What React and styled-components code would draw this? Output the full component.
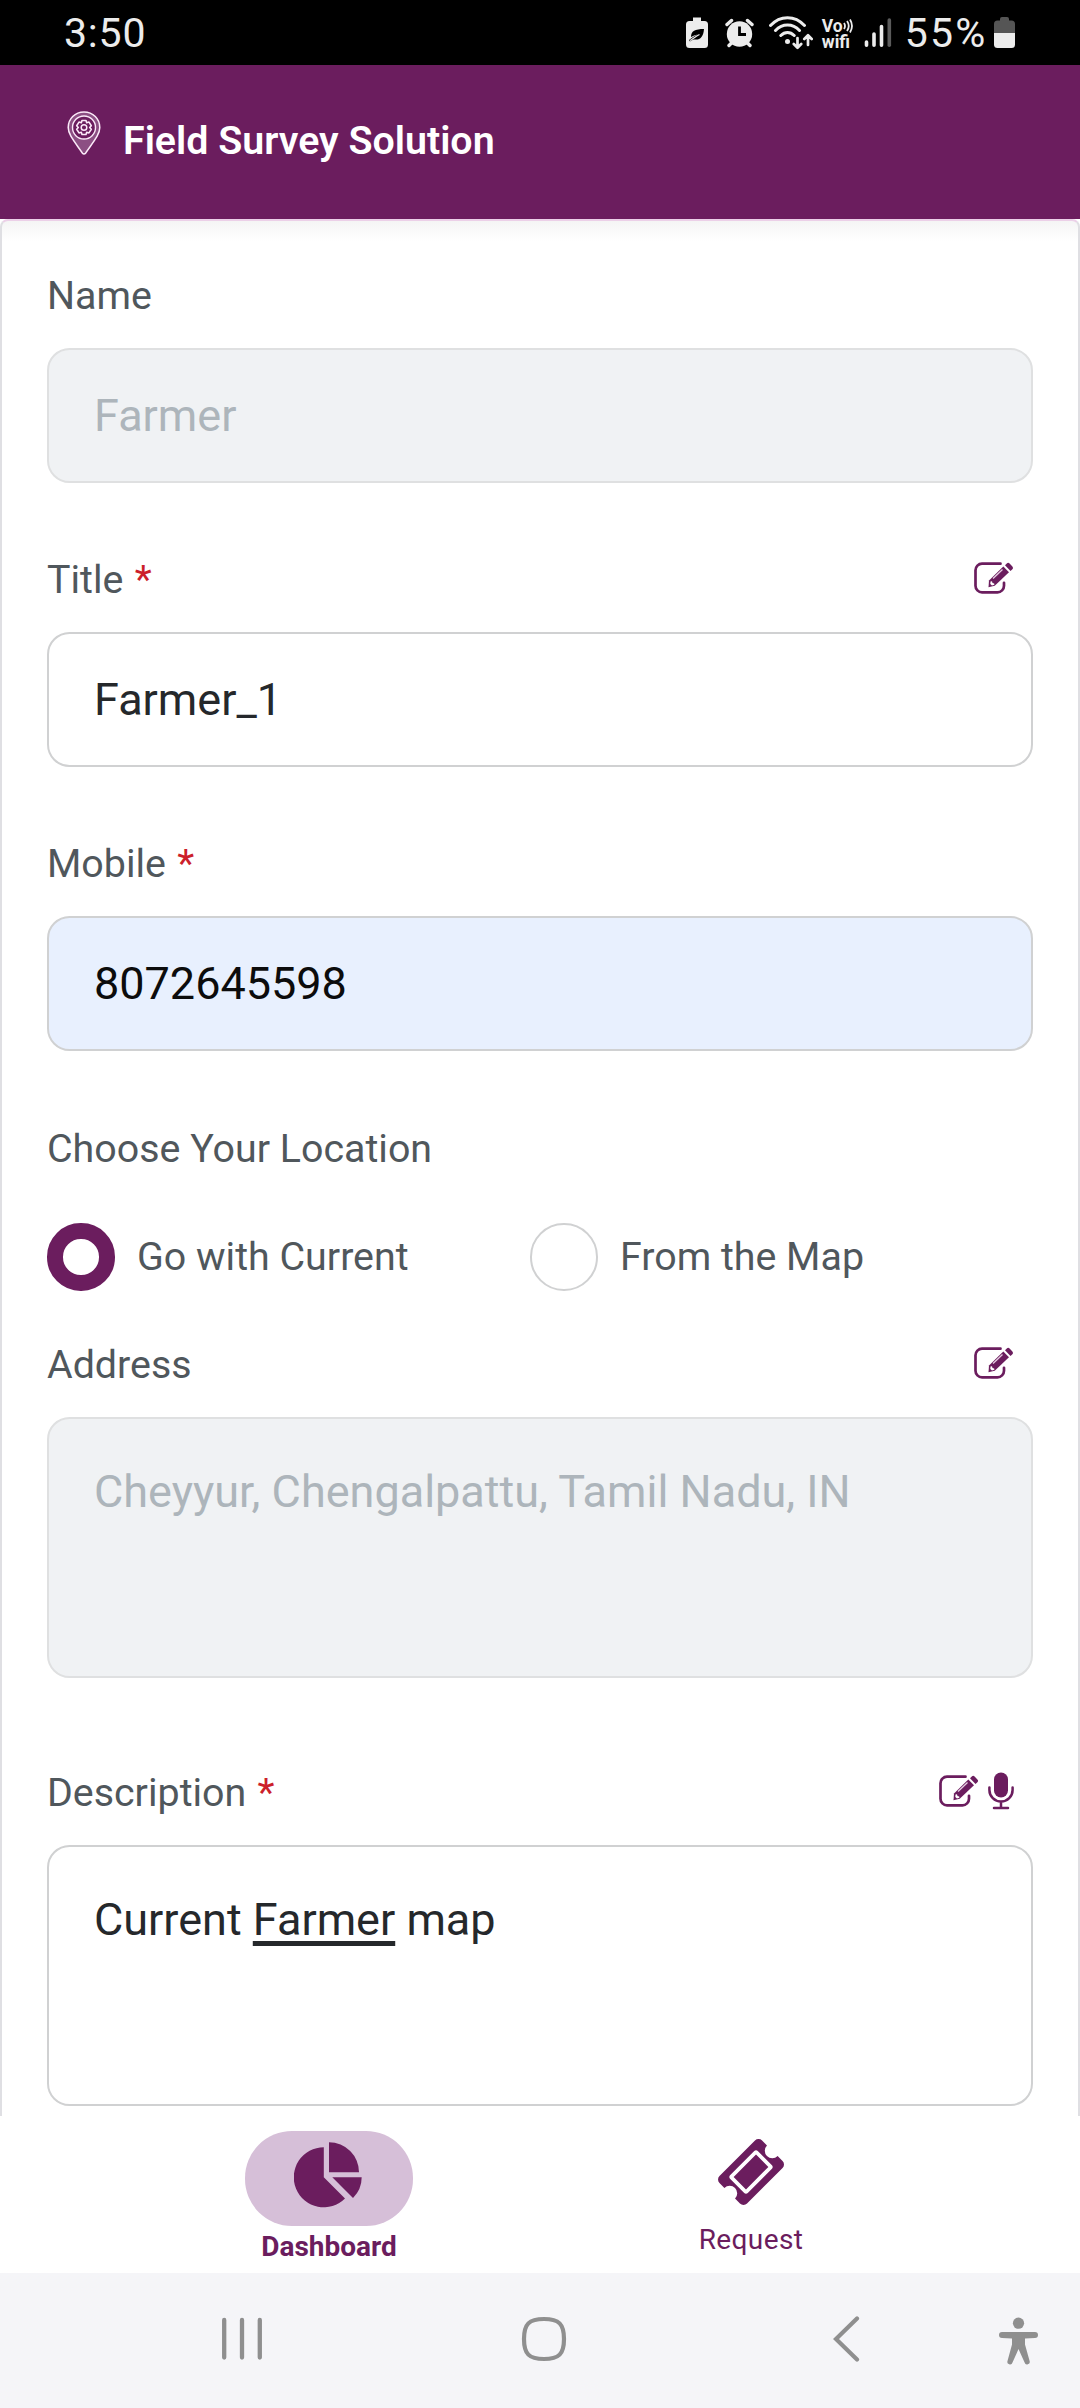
import React from 'react';
import styled, { createGlobalStyle } from 'styled-components';

const purple = '#6b1d5e';
const sysGrey = '#8f8f8f';

const GlobalStyle = createGlobalStyle`
  * {
    box-sizing: border-box;
  }
  body {
    margin: 0;
    background: #fff;
    font-family: Roboto, "Liberation Sans", sans-serif;
  }
  svg {
    display: block;
    flex: none;
  }
`;

const Screen = styled.div`
  width: 1080px;
  height: 2408px;
  display: flex;
  flex-direction: column;
  overflow: hidden;
`;

const StatusBar = styled.div`
  height: 65px;
  flex: none;
  display: flex;
  align-items: flex-start;
  justify-content: space-between;
  padding: 16px 65px 0 64px;
  background: #000;
  color: #ececec;
`;

const StatusText = styled.span`
  font-size: 41px;
  line-height: 34px;
  letter-spacing: ${props => props.$spacing};
  margin-right: ${props => props.$right || '0'};
`;

const StatusIcons = styled.div`
  display: flex;
  align-items: flex-start;
`;

const VoWifi = styled.div`
  width: 31px;
  margin: 2px 11px 0 9px;
  font-size: 17.5px;
  font-weight: 700;
  line-height: 16px;
  white-space: nowrap;
`;

const VoLine = styled.div`
  display: flex;
  align-items: center;
  height: 16px;
`;

const Header = styled.header`
  height: 154px;
  flex: none;
  display: flex;
  align-items: flex-start;
  padding: 46px 0 0 67px;
  background: ${purple};
`;

const Brand = styled.h1`
  margin: 7px 0 0 22px;
  color: #fff;
  font-size: 39.375px;
  line-height: 46px;
  font-weight: 600;
`;

const Card = styled.main`
  height: 1897px;
  flex: none;
  overflow: hidden;
  padding: 51px 45px 0;
  border: 2px solid #dfdfe3;
  border-top-color: #ecd0e8;
  border-bottom: none;
  border-radius: 8px 8px 0 0;
  background: linear-gradient(#f5f5f5, #fff 20px);
`;

const Field = styled.div`
  margin-bottom: ${props => props.$bottom};
`;

const LabelRow = styled.div`
  height: 46px;
  display: flex;
  align-items: flex-start;
  justify-content: space-between;
  padding-right: 19px;
`;

const Label = styled.label`
  color: #50575c;
  font-size: 39.375px;
  line-height: 47px;
`;

const Required = styled.span`
  margin-left: 1.5px;
  color: #cc1f2b;
`;

const LabelIcons = styled.div`
  height: 46px;
  display: flex;
  align-items: center;
  gap: 9px;
  margin-top: ${props => props.$top || '0'};
`;

const Control = styled.div`
  height: ${props => (props.$tall ? '261px' : '135px')};
  margin-top: 30px;
  padding: ${props => (props.$tall ? '38.5px 45px' : '32px 45px')};
  border: 2px solid ${props => (props.$disabled ? '#dfe0e1' : '#d0d1d2')};
  border-radius: 22.5px;
  background: ${props =>
    props.$disabled ? '#f0f2f4' : props.$autofill ? '#e8f0fe' : '#fff'};
  color: ${props =>
    props.$disabled ? '#adb5bb' : props.$autofill ? '#0c0c0c' : '#25282b'};
  font-size: 45px;
  line-height: 67.5px;
`;

const Composing = styled.span`
  text-decoration: underline;
  text-decoration-thickness: 5px;
  text-underline-offset: 6px;
  text-decoration-skip-ink: none;
`;

const RadioRow = styled.div`
  display: grid;
  grid-template-columns: 483px 1fr;
  margin: 52px 0 50.5px;
`;

const RadioOption = styled.div`
  display: flex;
  align-items: center;
  gap: 22.5px;
`;

const Radio = styled.span`
  width: 67.5px;
  height: 67.5px;
  border-radius: 50%;
  border: ${props => (props.$checked ? `16px solid ${purple}` : '2px solid #d0d1d2')};
  background: #fff;
`;

const TabBar = styled.nav`
  height: 157px;
  flex: none;
  display: flex;
  padding: 15px 118px 0;
  background: #fff;
`;

const Tab = styled.div`
  flex: 1;
  display: flex;
  flex-direction: column;
  align-items: center;
  color: ${purple};
`;

const TabIcon = styled.div`
  width: 168px;
  height: ${props => (props.$active ? '95px' : '82px')};
  display: flex;
  align-items: center;
  justify-content: center;
  padding: ${props => (props.$active ? '0 2px 7px 0' : '0')};
  border-radius: 47px;
  background: ${props => (props.$active ? '#d6bfd8' : 'transparent')};
`;

const TabLabel = styled.span`
  margin-top: ${props => (props.$active ? '4px' : '9.5px')};
  font-size: 28px;
  line-height: 33px;
  font-weight: ${props => (props.$active ? 700 : 400)};
  letter-spacing: ${props => (props.$active ? '0' : '0.4px')};
`;

const SystemBar = styled.div`
  height: 135px;
  flex: none;
  display: flex;
  padding: 43px 0 0 221px;
  background: #f5f5f8;
`;

const Spaced = styled.div`
  margin-left: ${props => props.$left || '0'};
`;

const PowerSaveIcon = () => (
  <svg width="22" height="32" viewBox="0 0 22 32">
    <path d="M7 1.500h8V5h3.500a3.500 3.500 0 0 1 3.500 3.500v20a3.500 3.500 0 0 1-3.500 3.500h-15A3.500 3.500 0 0 1 0 28.500v-20A3.500 3.500 0 0 1 3.500 5H7z" fill="#ececec" />
    <path d="M5 21c0-6 4-8 13-8-.5 8-4 11-9 10.500-1.500 0-3 .5-5 2l-1-1.500c2-1.200 5-4 9-5.500-3 .5-5 1.500-7 2.500z" fill="#000" />
    <path d="M4 24.500c2.500-1 5-4 9.500-6" fill="none" stroke="#ececec" strokeWidth="1.300" />
  </svg>
);

const AlarmIcon = () => (
  <svg width="30" height="32" viewBox="0 0 30 32">
    <circle cx="14.500" cy="18" r="12.700" fill="#ececec" />
    <path d="M2 8.500 6.500 4.500M27 8.500 22.500 4.500M6.500 27 4 29.500M22.500 27l2.500 2.500" stroke="#ececec" strokeWidth="3.400" strokeLinecap="round" />
    <path d="M14.500 10.500v8h6.500" fill="none" stroke="#000" strokeWidth="2.800" />
  </svg>
);

const WifiIcon = () => (
  <svg width="44" height="34" viewBox="0 0 44 34" fill="none" stroke="#ececec" strokeWidth="3" strokeLinecap="round">
    <path d="M1.500 9.500C11-1 26-1 35.500 9.500M6.500 14.500c7-7.300 17-7.300 24 0M11.800 19.500c4-4 9.400-4 13.400 0" />
    <circle cx="18.500" cy="25.500" r="2.500" fill="#ececec" stroke="none" />
    <path d="M28.500 22v9M24.800 28l3.700 3.700 3.700-3.700M39 29v-9M35.300 23l3.700-3.700 3.700 3.700" strokeWidth="2.700" strokeLinejoin="round" />
  </svg>
);

const SignalIcon = () => (
  <svg width="28" height="32" viewBox="0 0 28 32" strokeWidth="3.600" strokeLinecap="round">
    <path d="M2.500 26v3.200M10 18v11.200M17.500 10.500v18.700" stroke="#ececec" />
    <path d="M25.300 4v25.200" stroke="#5b5b5b" />
  </svg>
);

const BatteryIcon = () => (
  <svg width="21" height="32" viewBox="0 0 21 32">
    <path d="M0 17V8a3.500 3.500 0 0 1 3.500-3.500H6V3a2 2 0 0 1 2-2h5a2 2 0 0 1 2 2v1.500h2.500A3.500 3.500 0 0 1 21 8v9z" fill="#555" />
    <path d="M0 17h21v11.500a3.500 3.500 0 0 1-3.500 3.500h-14A3.500 3.500 0 0 1 0 28.500z" fill="#ececec" />
  </svg>
);

const PinIcon = () => (
  <svg width="34" height="44" viewBox="0 0 34 44" fill="none" stroke="#fbe9f8">
    <path d="M17 1C8 1 1.200 7.800 1.200 16.500c0 7 5.800 13.500 14.300 25.700.8 1 2.200 1 3 0C27 30 32.800 23.500 32.800 16.500 32.800 7.800 26 1 17 1z" fill="#8c4f83" strokeWidth="1.500" />
    <circle cx="17" cy="16.500" r="11.500" fill={purple} strokeWidth="1.400" />
    <path d="M15 9.500h4l.7 2.300 2.300-.7 2.300 3.600-1.600 1.800 1.600 1.800-2.300 3.600-2.300-.7-.7 2.300h-4l-.7-2.300-2.300.7-2.300-3.600 1.600-1.800-1.600-1.800 2.300-3.600 2.300.7z" strokeWidth="1.600" strokeLinejoin="round" />
    <circle cx="17" cy="16.500" r="2.800" strokeWidth="1.500" />
  </svg>
);

const EditIcon = () => (
  <svg width="40" height="32" viewBox="0 0 40 32">
    <path d="M26.500 1.700H8A6.500 6.500 0 0 0 1.500 8.200v15.600A6.500 6.500 0 0 0 8 30.300h15.500a6.500 6.500 0 0 0 6.500-6.500v-3" fill="none" stroke={purple} strokeWidth="2.700" strokeLinecap="round" />
    <path d="m29.300 4.500 5.700 5.700-14.300 13.600-6.200 1.400.5-6.800z" fill={purple} />
    <path d="m31 3.200 1.800-1.700a2 2 0 0 1 2.800 0l2.800 2.900a2 2 0 0 1 0 2.800l-1.900 1.700z" fill={purple} />
    <path d="m19 16.500 9.500-9" stroke="#e7cfe3" strokeWidth="1.300" />
    <path d="m16.500 19.500 1.500-.2.500 1.800 1.700.4.200 1.300-2.400.8-1.700-1.700z" fill="#fff" />
  </svg>
);

const MicIcon = () => (
  <svg width="26" height="38" viewBox="0 0 26 38">
    <rect x="6" y="0.500" width="14" height="25" rx="7" fill={purple} />
    <path d="M1.400 15.500V18a11.600 11.600 0 0 0 23.200 0v-2.500M13 30v6M6 36h14" fill="none" stroke={purple} strokeWidth="2.500" strokeLinecap="round" />
  </svg>
);

const PieIcon = () => (
  <svg width="68" height="66" viewBox="0 0 68 66" fill={purple}>
    <path d="M29.800 35.300V5.300a30 30 0 1 0 21.200 51.200z" />
    <path d="M35 30.300v-30a30 30 0 0 1 30 30z" />
    <path d="M38.300 35.300h29.400a29.400 29.400 0 0 1-8.700 20.700z" />
  </svg>
);

const TicketIcon = () => (
  <svg width="66" height="66" viewBox="53 53 1686 1686" fill={purple}>
    <path d="M1024 452l316 316-572 572-316-316zm-211 979l618-618q19-19 19-45t-19-45l-362-362q-18-18-45-18t-45 18l-618 618q-19 19-19 45t19 45l362 362q18 18 45 18t45-18zm889-637l-907 908q-37 37-90.500 37t-90.500-37l-126-126q56-56 56-136t-56-136-136-56-136 56l-125-126q-37-37-37-90.500t37-90.500l907-906q37-37 90.500-37t90.500 37l125 125q-56 56-56 136t56 136 136 56 136-56l126 125q37 37 37 90.500t-37 90.500z" />
  </svg>
);

const RecentsIcon = () => (
  <svg width="42" height="46" viewBox="0 0 42 46">
    <path d="M3.200 4v37.500M21 4v37.500M38.800 4v37.500" stroke={sysGrey} strokeWidth="4.300" strokeLinecap="round" />
  </svg>
);

const HomeIcon = () => (
  <svg width="46" height="46" viewBox="0 0 46 46">
    <path d="M23 3C8 3 3 8 3 23s5 20 20 20 20-5 20-20S38 3 23 3z" fill="none" stroke={sysGrey} strokeWidth="4.200" />
  </svg>
);

const BackIcon = () => (
  <svg width="27" height="46" viewBox="0 0 27 46">
    <path d="M24 2.500 3 23l21 20.500" fill="none" stroke={sysGrey} strokeWidth="4.200" strokeLinecap="round" />
  </svg>
);

const AccessibilityIcon = () => (
  <svg width="40" height="50" viewBox="0 0 40 50" fill={sysGrey}>
    <circle cx="19.500" cy="7.200" r="5.600" />
    <path d="M3 16h33a3 3 0 0 1 0 6l-10 .6v6l4.600 16.500a2.600 2.600 0 0 1-5 1.500L19.500 33l-6 13.600a2.600 2.600 0 0 1-5-1.500L13 28.600v-6L3 22a3 3 0 0 1 0-6z" />
  </svg>
);

function FieldLabel({ text, required, children, iconTop }) {
  return (
    <LabelRow>
      <Label>
        {text} {required && <Required>*</Required>}
      </Label>
      {children && <LabelIcons $top={iconTop}>{children}</LabelIcons>}
    </LabelRow>
  );
}

export default function App() {
  return (
    <Screen>
      <GlobalStyle />
      <StatusBar>
        <StatusText $spacing="0.8px">3:50</StatusText>
        <StatusIcons>
          <PowerSaveIcon />
          <Spaced $left="17px">
            <AlarmIcon />
          </Spaced>
          <Spaced $left="14px">
            <WifiIcon />
          </Spaced>
          <VoWifi>
            <VoLine>
              Vo
              <svg width="10" height="14" viewBox="0 0 10 14" fill="none" stroke="#ececec" strokeWidth="1.800">
                <path d="M1 4q2 3 0 6M4 2q3.500 5 0 10M7 .5q4 6.500 0 13" />
              </svg>
            </VoLine>
            <div>wifi</div>
          </VoWifi>
          <SignalIcon />
          <Spaced $left="13px">
            <StatusText $spacing="2.2px" $right="6.500px">55%</StatusText>
          </Spaced>
          <BatteryIcon />
        </StatusIcons>
      </StatusBar>

      <Header>
        <PinIcon />
        <Brand>Field Survey Solution</Brand>
      </Header>

      <Card>
        <Field $bottom="73px">
          <FieldLabel text="Name" />
          <Control $disabled>Farmer</Control>
        </Field>
        <Field $bottom="73px">
          <FieldLabel text="Title" required iconTop="-1.500px">
            <EditIcon />
          </FieldLabel>
          <Control>Farmer_1</Control>
        </Field>
        <Field $bottom="74px">
          <FieldLabel text="Mobile" required />
          <Control $autofill>8072645598</Control>
        </Field>

        <FieldLabel text="Choose Your Location" />
        <RadioRow>
          <RadioOption>
            <Radio $checked />
            <Label>Go with Current</Label>
          </RadioOption>
          <RadioOption>
            <Radio />
            <Label>From the Map</Label>
          </RadioOption>
        </RadioRow>

        <Field $bottom="91px">
          <FieldLabel text="Address" iconTop="-1.500px">
            <EditIcon />
          </FieldLabel>
          <Control $tall $disabled>Cheyyur, Chengalpattu, Tamil Nadu, IN</Control>
        </Field>
        <Field $bottom="0">
          <FieldLabel text="Description" required iconTop="-1.500px">
            <EditIcon />
            <MicIcon />
          </FieldLabel>
          <Control $tall>
            Current <Composing>Farmer</Composing> map
          </Control>
        </Field>
      </Card>

      <TabBar>
        <Tab>
          <TabIcon $active>
            <PieIcon />
          </TabIcon>
          <TabLabel $active>Dashboard</TabLabel>
        </Tab>
        <Tab>
          <TabIcon>
            <TicketIcon />
          </TabIcon>
          <TabLabel>Request</TabLabel>
        </Tab>
      </TabBar>

      <SystemBar>
        <Spaced>
          <RecentsIcon />
        </Spaced>
        <Spaced $left="258px">
          <HomeIcon />
        </Spaced>
        <Spaced $left="266px">
          <BackIcon />
        </Spaced>
        <Spaced $left="139px">
          <AccessibilityIcon />
        </Spaced>
      </SystemBar>
    </Screen>
  );
}
